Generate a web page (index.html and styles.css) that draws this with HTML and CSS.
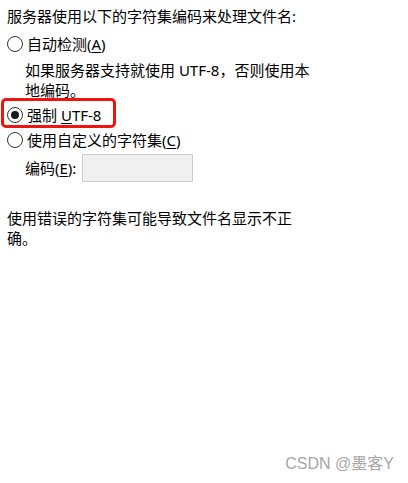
FILE: index.html
```html
<!DOCTYPE html>
<html lang="zh-CN">
<head>
<meta charset="utf-8">
<title>字符集编码</title>
<link rel="stylesheet" href="styles.css">
</head>
<body>
<div class="dialog">
  <p class="intro">服务器使用以下的字符集编码来处理文件名:</p>

  <label class="radio-row first">
    <span class="radio"></span>
    <span class="label">自动检测(<u>A</u>)</span>
  </label>
  <p class="desc">如果服务器支持就使用 UTF-8，否则使用本地编码。</p>

  <label class="radio-row highlighted">
    <span class="radio checked"></span>
    <span class="label">强制 <u>U</u>TF-8</span>
  </label>

  <label class="radio-row">
    <span class="radio"></span>
    <span class="label">使用自定义的字符集(<u>C</u>)</span>
  </label>

  <div class="encoding-row">
    <span class="enc-label">编码(<u>E</u>):</span>
    <span class="enc-input"></span>
  </div>

  <p class="warning">使用错误的字符集可能导致文件名显示不正确。</p>
</div>
<div class="watermark">CSDN @墨客Y</div>
</body>
</html>
```

FILE: styles.css
```css
html, body {
  margin: 0;
  padding: 0;
  background: #ffffff;
}

body {
  width: 408px;
  height: 483px;
  position: relative;
  overflow: hidden;
  font-family: "Noto Sans", "Noto Sans CJK SC", sans-serif;
  font-size: 15px;
  line-height: 20px;
  color: #000000;
}

.dialog {
  padding: 6px 0 0 7px;
  display: flex;
  flex-direction: column;
  align-items: flex-start;
}

.intro {
  margin: 0;
}

.radio-row {
  display: flex;
  align-items: center;
  height: 20px;
  margin-top: 5px;
  position: relative;
}

.radio-row.first {
  margin-top: 8px;
}

.radio {
  width: 14px;
  height: 14px;
  border: 1px solid #333333;
  border-radius: 50%;
  background: #ffffff;
  margin-left: 0;
  margin-right: 4px;
  display: flex;
  align-items: center;
  justify-content: center;
  flex-shrink: 0;
}

.radio.checked::before {
  content: "";
  width: 8px;
  height: 8px;
  border-radius: 50%;
  background: #1a1a1a;
}

.label u,
.enc-label u {
  text-decoration: underline;
  text-underline-offset: 2px;
}

.desc {
  margin: 6px 0 0 18px;
  width: 296px;
}

.highlighted::after {
  content: "";
  position: absolute;
  left: -6px;
  top: -7px;
  width: 109px;
  height: 24px;
  border: 3px solid #f0140e;
  border-radius: 5px;
}

.encoding-row {
  display: flex;
  align-items: center;
  margin: 4px 0 0 18px;
  height: 28px;
}

.enc-label {
  margin-right: 6px;
}

.enc-input {
  width: 109px;
  height: 26px;
  background: #f0f0f0;
  border: 1px solid #cccccc;
}

.warning {
  margin: 26px 0 0 0;
  width: 292px;
}

.watermark {
  position: absolute;
  right: 14px;
  top: 454px;
  font-family: "Liberation Sans", "Noto Sans CJK SC", sans-serif;
  font-size: 16px;
  line-height: 20px;
  color: #a6a6a6;
}
```
